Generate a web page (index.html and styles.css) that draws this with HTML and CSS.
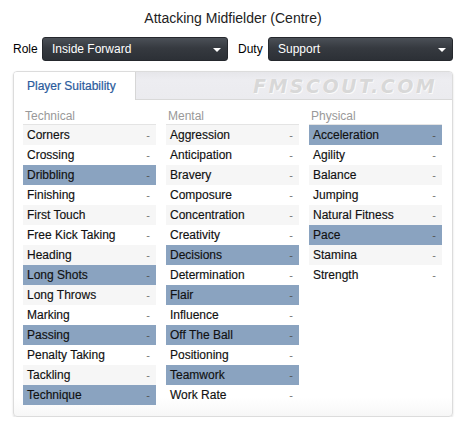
FILE: index.html
```html
<!DOCTYPE html>
<html>
<head>
<meta charset="utf-8">
<link rel="stylesheet" href="styles.css">
</head>
<body>
<div class="title">Attacking Midfielder (Centre)</div>
<div class="controls">
  <span class="label">Role</span>
  <div class="select role"><span>Inside Forward</span><i class="caret"></i></div>
  <span class="label duty-label">Duty</span>
  <div class="select duty"><span>Support</span><i class="caret"></i></div>
</div>
<div class="panel">
  <div class="tabbar">
    <div class="tab">Player Suitability</div>
    <div class="watermark">FMSCOUT.COM</div>
  </div>
  <div class="columns">
    <div class="col">
      <div class="head">Technical</div>
      <div class="row"><span>Corners</span><b>-</b></div>
      <div class="row"><span>Crossing</span><b>-</b></div>
      <div class="row hl"><span>Dribbling</span><b>-</b></div>
      <div class="row"><span>Finishing</span><b>-</b></div>
      <div class="row"><span>First Touch</span><b>-</b></div>
      <div class="row"><span>Free Kick Taking</span><b>-</b></div>
      <div class="row"><span>Heading</span><b>-</b></div>
      <div class="row hl"><span>Long Shots</span><b>-</b></div>
      <div class="row"><span>Long Throws</span><b>-</b></div>
      <div class="row"><span>Marking</span><b>-</b></div>
      <div class="row hl"><span>Passing</span><b>-</b></div>
      <div class="row"><span>Penalty Taking</span><b>-</b></div>
      <div class="row"><span>Tackling</span><b>-</b></div>
      <div class="row hl"><span>Technique</span><b>-</b></div>
    </div>
    <div class="col">
      <div class="head">Mental</div>
      <div class="row"><span>Aggression</span><b>-</b></div>
      <div class="row"><span>Anticipation</span><b>-</b></div>
      <div class="row"><span>Bravery</span><b>-</b></div>
      <div class="row"><span>Composure</span><b>-</b></div>
      <div class="row"><span>Concentration</span><b>-</b></div>
      <div class="row"><span>Creativity</span><b>-</b></div>
      <div class="row hl"><span>Decisions</span><b>-</b></div>
      <div class="row"><span>Determination</span><b>-</b></div>
      <div class="row hl"><span>Flair</span><b>-</b></div>
      <div class="row"><span>Influence</span><b>-</b></div>
      <div class="row hl"><span>Off The Ball</span><b>-</b></div>
      <div class="row"><span>Positioning</span><b>-</b></div>
      <div class="row hl"><span>Teamwork</span><b>-</b></div>
      <div class="row"><span>Work Rate</span><b>-</b></div>
    </div>
    <div class="col">
      <div class="head">Physical</div>
      <div class="row hl"><span>Acceleration</span><b>-</b></div>
      <div class="row"><span>Agility</span><b>-</b></div>
      <div class="row"><span>Balance</span><b>-</b></div>
      <div class="row"><span>Jumping</span><b>-</b></div>
      <div class="row"><span>Natural Fitness</span><b>-</b></div>
      <div class="row hl"><span>Pace</span><b>-</b></div>
      <div class="row"><span>Stamina</span><b>-</b></div>
      <div class="row"><span>Strength</span><b>-</b></div>
    </div>
  </div>
</div>
</body>
</html>
```
FILE: styles.css
```css
* { box-sizing: border-box; }
body {
  margin: 0;
  background: #fff;
  font-family: "Liberation Sans", Arial, sans-serif;
  color: #111;
  width: 466px;
}
.title {
  padding-top: 10px;
  height: 37px;
  line-height: 16px;
  font-size: 14px;
  text-align: center;
  color: #222;
}
.controls {
  display: flex;
  align-items: center;
  height: 24px;
  padding-left: 13px;
  font-size: 12px;
}
.label { color: #000; width: 29px; }
.duty-label { margin-left: 10px; width: 30px; }
.select {
  position: relative;
  height: 24px;
  display: flex;
  align-items: center;
  padding-left: 9px;
  color: #fff;
  font-size: 12px;
  border: 1px solid #25282d;
  border-radius: 3px;
  background: linear-gradient(#4b5057, #363a40 45%, #2c3036);
}
.role { width: 186px; }
.duty { width: 185px; }
.caret {
  position: absolute;
  right: 6px;
  top: 10px;
  width: 0; height: 0;
  border-left: 4px solid transparent;
  border-right: 4px solid transparent;
  border-top: 4px solid #fff;
}
.panel {
  margin: 10px 0 0 13px;
  width: 440px;
  height: 346px;
  border: 1px solid #dcdcdc;
  border-radius: 4px;
  box-shadow: 0 1px 2px rgba(0,0,0,0.15);
  background: linear-gradient(#fff 0, #fff 326px, #f7f7f7 344px);
  overflow: hidden;
}
.tabbar {
  display: flex;
  align-items: stretch;
  height: 28px;
  background: linear-gradient(#e6e6ea, #ededf1 30%, #ebebef);
  border-bottom: 1px solid #d9d9d9;
}
.tab {
  width: 122px;
  background: #fff;
  border-right: 1px solid #d6d6d6;
  margin-bottom: -1px;
  color: #2b5b9c;
  font-size: 12px;
  display: flex;
  align-items: center;
  padding-left: 13px;
  -webkit-text-stroke: 0.2px #2b5b9c;
}
.watermark {
  margin-left: 117px;
  align-self: center;
  font-size: 20px;
  font-weight: bold;
  font-style: italic;
  letter-spacing: 2.6px;
  color: #d8d8d8;
  text-shadow: 0 0 1px #fff, 1px 1px 0 #fafafa;
  font-family: "DejaVu Sans", sans-serif;
  transform: scaleX(0.95);
  transform-origin: left center;
}
.columns {
  display: flex;
  gap: 10px;
  padding-left: 9px;
}
.col { width: 133px; }
.head {
  height: 25px;
  padding-top: 9px;
  padding-left: 2px;
  font-size: 12px;
  color: #999;
  border-bottom: 1px solid #e4e4e4;
}
.row {
  height: 20px;
  display: flex;
  align-items: center;
  justify-content: space-between;
  padding: 0 6px 0 4px;
  font-size: 12px;
  color: #111;
  -webkit-text-stroke: 0.15px #111;
}
.row:nth-child(even) { background: #f6f6f6; }
.row.hl { background: #8aa3c0; }
.row b { font-weight: normal; color: #777; font-size: 11px; -webkit-text-stroke: 0; }
.row.hl b { color: #555; }
```
